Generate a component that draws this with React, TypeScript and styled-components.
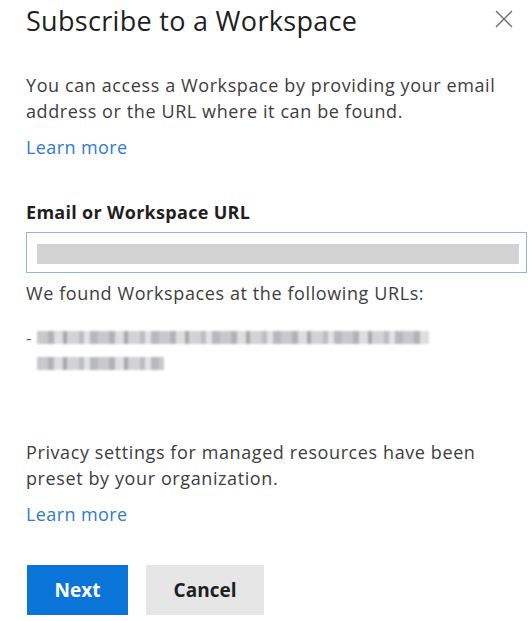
import styled, { createGlobalStyle } from "styled-components";

const GlobalStyle = createGlobalStyle`
  html, body {
    margin: 0;
    padding: 0;
    background: #ffffff;
  }
  body {
    font-family: "Open Sans", "Noto Sans", "Liberation Sans", sans-serif;
    -webkit-font-smoothing: antialiased;
  }
`;

const Panel = styled.div`
  width: 532px;
  height: 621px;
  box-sizing: border-box;
  padding: 0 5px 0 26px;
  display: flex;
  flex-direction: column;
  color: #3b3b3b;
  overflow: hidden;
`;

const Header = styled.header`
  display: flex;
  align-items: flex-start;
  justify-content: space-between;
  padding-top: 3px;
`;

const Title = styled.h1`
  margin: 0;
  font-size: 27px;
  font-weight: 400;
  line-height: 36px;
  color: #1f1f1f;
  letter-spacing: 0.3px;
`;

const CloseButton = styled.button`
  border: none;
  background: transparent;
  padding: 0;
  margin: 6px 13px 0 0;
  width: 20px;
  height: 20px;
  display: flex;
  align-items: center;
  justify-content: center;
  cursor: pointer;
  color: #6b6b6b;
`;

const Paragraph = styled.p<{ $top?: number }>`
  margin: ${({ $top }) => $top ?? 0}px 0 0;
  font-size: 18px;
  line-height: 26px;
  letter-spacing: 0.6px;
  color: #3d3d3d;
`;

const LinkText = styled.a<{ $top?: number }>`
  display: block;
  margin-top: ${({ $top }) => $top ?? 0}px;
  font-size: 18px;
  line-height: 26px;
  letter-spacing: 0.4px;
  color: #2f7bd1;
  text-decoration: none;
  cursor: pointer;
`;

const Label = styled.label`
  display: block;
  margin-top: 40px;
  font-size: 18px;
  font-weight: 700;
  line-height: 24px;
  letter-spacing: 0.3px;
  color: #1f1f1f;
`;

const InputBox = styled.div`
  margin-top: 8px;
  height: 41px;
  box-sizing: border-box;
  border: 1px solid #8fb4e3;
  padding: 11px 7px 0 10px;
`;

const Redacted = styled.div<{ $height: number }>`
  width: 100%;
  height: ${({ $height }) => $height}px;
  background: #d2d2d2;
`;

const UrlList = styled.div`
  margin-top: 25px;
  display: flex;
  flex-direction: column;
  gap: 13px;
`;

const UrlRow = styled.div<{ $indent?: boolean }>`
  display: flex;
  align-items: center;
  gap: 5px;
  height: 13px;
  padding-left: ${({ $indent }) => ($indent ? 11 : 0)}px;
`;

const Dash = styled.span`
  width: 6px;
  font-size: 17px;
  line-height: 13px;
  color: #555;
`;

const Pixelated = styled.span<{ $width: number }>`
  display: block;
  width: ${({ $width }) => $width}px;
  height: 13px;
  filter: blur(1.2px);
  background:
    repeating-linear-gradient(
      90deg,
      #c9c9cc 0 11px,
      #b1b2b6 11px 17px,
      #dededf 17px 26px,
      #a8a9ad 26px 30px,
      #d3d3d5 30px 42px,
      #bcbdc1 42px 47px,
      #e2e2e3 47px 53px,
      #b8b9bd 53px 61px
    );
`;

const ButtonRow = styled.div`
  display: flex;
  gap: 18px;
  margin-top: 38px;
  margin-left: 1px;
`;

const Button = styled.button<{ $primary?: boolean }>`
  height: 50px;
  padding: 0;
  width: ${({ $primary }) => ($primary ? 101 : 118)}px;
  border: none;
  font-family: inherit;
  font-size: 19px;
  font-weight: 700;
  cursor: pointer;
  background: ${({ $primary }) => ($primary ? "#0b74d8" : "#e6e6e6")};
  color: ${({ $primary }) => ($primary ? "#ffffff" : "#1f1f1f")};
`;

export default function App() {
  return (
    <>
      <GlobalStyle />
      <Panel>
        <Header>
          <Title>Subscribe to a Workspace</Title>
          <CloseButton aria-label="Close">
            <svg width="18" height="18" viewBox="0 0 18 18">
              <path d="M1 1 L17 17 M17 1 L1 17" stroke="currentColor" strokeWidth="1.3" fill="none" />
            </svg>
          </CloseButton>
        </Header>

        <Paragraph $top={33}>
          You can access a Workspace by providing your email address or the URL where it can be found.
        </Paragraph>
        <LinkText $top={10}>Learn more</LinkText>

        <Label>Email or Workspace URL</Label>
        <InputBox>
          <Redacted $height={20} />
        </InputBox>

        <Paragraph $top={7}>We found Workspaces at the following URLs:</Paragraph>
        <UrlList>
          <UrlRow>
            <Dash>-</Dash>
            <Pixelated $width={392} />
          </UrlRow>
          <UrlRow $indent>
            <Pixelated $width={127} />
          </UrlRow>
        </UrlList>

        <Paragraph $top={69}>
          Privacy settings for managed resources have been preset by your organization.
        </Paragraph>
        <LinkText $top={10}>Learn more</LinkText>

        <ButtonRow>
          <Button $primary>Next</Button>
          <Button>Cancel</Button>
        </ButtonRow>
      </Panel>
    </>
  );
}
